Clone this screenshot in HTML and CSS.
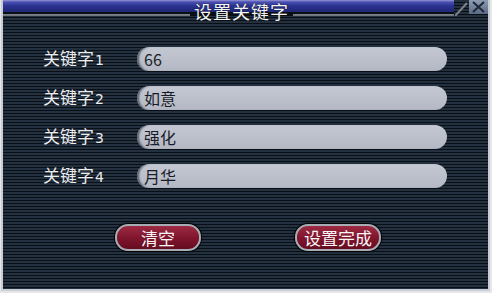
FILE: index.html
```html
<!DOCTYPE html>
<html lang="zh">
<head>
<meta charset="utf-8">
<title>设置关键字</title>
<link rel="stylesheet" href="styles.css">
</head>
<body>
<div class="window">
  <div class="titlebar">
    <span></span>
    <span class="title">设置关键字</span>
    <span class="close"><svg width="33" height="16" viewBox="0 0 33 16"><defs><linearGradient id="cg" x1="0" y1="0" x2="0" y2="1"><stop offset="0" stop-color="#8e9cb2"/><stop offset="1" stop-color="#5a6a84"/></linearGradient></defs><path d="M0 16 L12 3" stroke="#7c828a" stroke-width="2"/><rect x="14" y="0" width="19" height="14" fill="url(#cg)"/><path d="M18 2 L29 12 M29 2 L18 12" stroke="#1e2838" stroke-width="2"/></svg></span>
  </div>
  <div class="form">
    <div class="row"><span class="label">关键字<small>1</small></span><div class="field">66</div></div>
    <div class="row"><span class="label">关键字<small>2</small></span><div class="field">如意</div></div>
    <div class="row"><span class="label">关键字<small>3</small></span><div class="field">强化</div></div>
    <div class="row"><span class="label">关键字<small>4</small></span><div class="field">月华</div></div>
  </div>
  <div class="actions">
    <button class="btn">清空</button>
    <button class="btn">设置完成</button>
  </div>
</div>
</body>
</html>
```
FILE: styles.css
```css
html, body {
  margin: 0;
  padding: 0;
}
body {
  width: 492px;
  height: 293px;
  background: #e4e6ea;
  overflow: hidden;
  font-family: "Noto Sans CJK SC", "Noto Sans", sans-serif;
}
.window {
  box-sizing: border-box;
  width: 489px;
  height: 291px;
  margin-left: 1px;
  border-left: 2px solid #c9cdd4;
  border-right: 2px solid #c9cdd4;
  border-bottom: 2px solid #c9cdd4;
  background: repeating-linear-gradient(to bottom, #223040 0, #223040 2px, #0a0f15 2px, #0a0f15 3px);
}
.titlebar {
  height: 22px;
  display: grid;
  grid-template-columns: 1fr auto 1fr;
  align-items: start;
  background:
    linear-gradient(to bottom,
      #9a98d8 0, #4a50b0 2px, #2a3290 6px, #1e2674 12px,
      #0a0e16 12px, #0a0e16 14px,
      #80868e 14px, #6a7078 16px, transparent 16px)
    left top / calc(100% - 34px) 22px no-repeat;
}
.title {
  color: #f4f4f4;
  font-size: 18px;
  letter-spacing: 1px;
  line-height: 19px;
  height: 19px;
  padding: 2px 4px 0;
  margin-left: -8px;
  background: linear-gradient(to bottom, transparent 0, transparent 13px, #0a0f15 13px, #0a0f15 16px, transparent 16px);
  text-shadow: 0 0 1px #000;
}
.close {
  justify-self: end;
  height: 16px;
}
.close svg {
  display: block;
}
.form {
  padding: 25px 0 0 40px;
  display: flex;
  flex-direction: column;
  gap: 15px;
}
.row {
  display: flex;
  align-items: center;
  height: 24px;
}
.label {
  width: 94px;
  color: #ececec;
  font-size: 17px;
  line-height: 24px;
}
.label small {
  font-family: "DejaVu Sans", sans-serif;
  font-size: 14px;
  margin-left: 1px;
}
.field {
  box-sizing: border-box;
  width: 310px;
  height: 24px;
  border-radius: 12px;
  background: linear-gradient(to bottom, #c4c8d2, #b4b8c4);
  box-shadow: inset 3px 0 2px -1px #58606e;
  color: #181c28;
  font-size: 16px;
  line-height: 24px;
  padding-left: 7px;
}
.actions {
  display: flex;
  padding: 36px 0 0 112px;
  gap: 94px;
}
.btn {
  box-sizing: border-box;
  width: 86px;
  height: 27px;
  border: 2px solid #a8acb4;
  border-radius: 13px;
  background: linear-gradient(to bottom, #9c2a42, #80162e 50%, #660c20);
  color: #f6f6f6;
  font-family: "Noto Sans CJK SC", "Noto Sans", sans-serif;
  font-size: 17px;
  line-height: 21px;
  padding: 0;
  box-shadow: 0 0 1px 1px #000;
}
```
